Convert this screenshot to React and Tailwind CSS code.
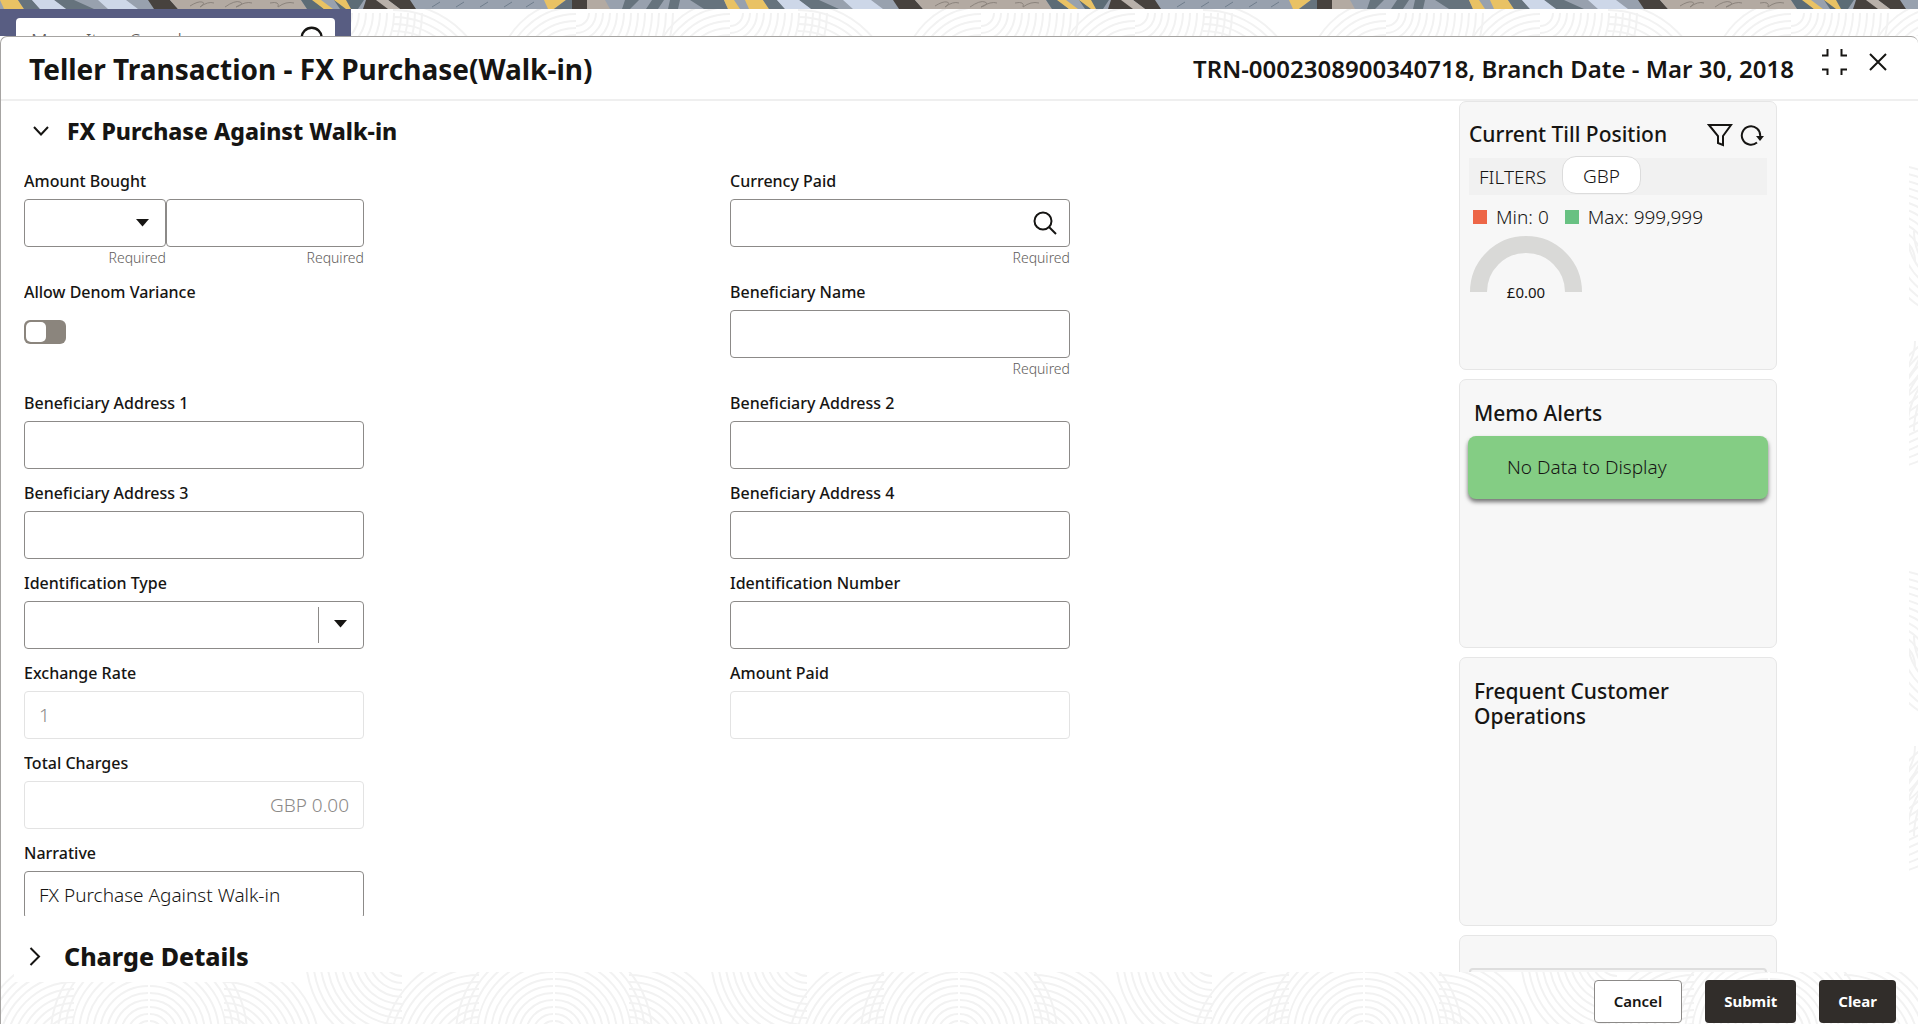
import {useState} from 'react'

// quarter arcs, concentric around cx/cy: nw, ne, sw, se
const QUADRANTS = {
  nw: [-1, -1, 1],
  ne: [1, -1, 0],
  sw: [-1, 1, 0],
  se: [1, 1, 1],
}

const FOOTER_ARCS = [
  {cx: 181, cy: 62, r: 97, quadrant: 'nw'},
  {cx: 183, cy: 62, r: 97, quadrant: 'ne'},
  {cx: 107, cy: 78, r: 96, quadrant: 'nw'},
  {cx: 257, cy: 78, r: 96, quadrant: 'ne'},
  {cx: 435, cy: -15, r: 96, quadrant: 'sw'},
  {cx: 30, cy: -15, r: 96, quadrant: 'sw'},
]

const TOP_ARCS = [
  {cx: 80, cy: 4, r: 97, quadrant: 'se'},
  {cx: 80, cy: 70, r: 79, quadrant: 'nw'},
  {cx: 234, cy: 4, r: 97, quadrant: 'se'},
  {cx: 234, cy: 70, r: 79, quadrant: 'nw'},
  {cx: 302, cy: 92, r: 98, quadrant: 'ne'},
]

const EDGE_ARCS = [
  {cx: -20, cy: 160, r: 96, quadrant: 'ne'},
  {cx: 60, cy: 130, r: 90, quadrant: 'sw'},
  {cx: 80, cy: 330, r: 110, quadrant: 'nw'},
  {cx: -40, cy: 240, r: 130, quadrant: 'se'},
]

function arcPath(cx, cy, r, quadrant) {
  const [dx, dy, sweep] = QUADRANTS[quadrant]
  return `M${cx + dx * r} ${cy}A${r} ${r} 0 0 ${sweep} ${cx} ${cy + dy * r}`
}

function RippleBackground({id, arcs, x = 0, height}) {
  return (
    <svg className="block w-full h-full" aria-hidden="true">
      <defs>
        <pattern id={id} x={x} width="405" height={height} patternUnits="userSpaceOnUse">
          <g fill="none" stroke="#f2f2f2" strokeWidth="2">
            {arcs.map(({cx, cy, r, quadrant}, index) => (
              <path
                key={index}
                d={Array.from({length: 13}, (_, i) => r - i * 7)
                  .filter(radius => radius > 0)
                  .map(radius => arcPath(cx, cy, radius, quadrant))
                  .join('')}
              />
            ))}
          </g>
        </pattern>
      </defs>
      <rect width="100%" height="100%" fill={`url(#${id})`} />
    </svg>
  )
}

function RibbonStrip() {
  return (
    <svg className="block w-full h-[9px]" aria-hidden="true">
      <defs>
        <pattern id="ribbon" width="745" height="9" patternUnits="userSpaceOnUse">
          <rect width="745" height="9" fill="#98a1ae" />
          <path d="M0 0h18l6 9H4z" fill="#e9c264" />
          <path d="M18 0h14l8 9H24zM54 0h20l20 9H66z" fill="#66737d" />
          <path d="M32 0h22l12 9H40zM98 0h28l12 9H108z" fill="#cdd7e8" />
          <path d="M148 0h22l8 9h-24z" fill="#47423e" />
          <path d="M170 0h131l6 9H178z" fill="#b3aaa2" />
          <path d="M190 6q8-5 12-4t-2 5q8-6 14-4M225 7q10-7 15-5t-4 5q10-6 16-4M270 3q10-2 8 4 8-6 16-4" fill="none" stroke="#8b837c" />
          <path d="M301 0h13l10 9h-17zM334 0h30l-6 9h-18z" fill="#5c6c76" />
          <path d="M312 0h9l12 9h-9zM334 0h12l5 9h-5z" fill="#e9c264" />
          <path d="M366 0h14l16 9h-33zM388 0h22l6 9h-16z" fill="#47423e" />
          <path d="M376 0h12l12 9h-12z" fill="#b9b1aa" />
          <path d="M432 7l8-5M456 7l8-5M480 7l8-5M504 7l8-5M526 7l8-5" stroke="#6f7d8c" />
          <path d="M544 0h22l-12 9h-6z" fill="#e9c264" />
          <path d="M566 0h8l-2 9h-18z" fill="#66737d" />
          <path d="M572 0h15v9h-15z" fill="#47423e" />
          <path d="M587 0h18l5 9h-23z" fill="#b3aaa2" />
          <path d="M625 0h14l-9 9h-8zM652 0h12l-6 9h-12zM670 0h10l-2 9h-10zM690 0h34l4 9h-24z" fill="#66737d" />
          <path d="M724 0h10l6 9h-12z" fill="#e9c264" />
        </pattern>
      </defs>
      <rect width="100%" height="9" fill="url(#ribbon)" />
    </svg>
  )
}

function SearchIcon({className = ''}) {
  return (
    <svg viewBox="0 0 24 24" className={className} fill="none" stroke="#161513" strokeWidth="2" aria-hidden="true">
      <circle cx="10" cy="10" r="8.5" />
      <path d="M16 16l7 7" />
    </svg>
  )
}

function CaretDown({className = ''}) {
  return (
    <svg viewBox="0 0 13 8" className={`w-[13px] h-2 pointer-events-none ${className}`} aria-hidden="true">
      <path d="M0 0h13L6.500 7.500z" fill="#161513" />
    </svg>
  )
}

const LABEL = 'block h-[30px] text-base leading-6 font-medium'
const INPUT = 'block w-full h-12 px-[14px] rounded-[4px] border bg-white text-[19px] font-light'
const ENABLED = 'border-[#8c8a88] text-[#161513]'
const DISABLED = 'border-[#e3e3e3] text-[#8b8987]'

function Required() {
  return <p className="pt-px text-[14px] leading-5 font-light text-right text-[#5e5c5a]">Required</p>
}

function Field({id, label, required, disabled, className = '', inputClassName = '', children, ...rest}) {
  return (
    <div className={className}>
      <label htmlFor={id} className={LABEL}>
        {label}
      </label>
      <div className="relative">
        <input
          id={id}
          type="text"
          disabled={disabled}
          className={`${INPUT} ${disabled ? DISABLED : ENABLED} ${inputClassName}`}
          {...rest}
        />
        {children}
      </div>
      {required && <Required />}
    </div>
  )
}

function FxPurchaseForm() {
  const [variance, setVariance] = useState(false)

  return (
    <div className="grid grid-cols-4 gap-x-[13px] gap-y-3 pt-[22px]">
      <fieldset>
        <legend className={LABEL}>Amount Bought</legend>
        <div className="flex">
          <div className="w-[142px]">
            <div className="relative">
              <select aria-label="Currency" className={`${INPUT} ${ENABLED} appearance-none`} />
              <CaretDown className="absolute right-[17px] top-5" />
            </div>
            <Required />
          </div>
          <div className="flex-1">
            <input type="text" aria-label="Amount" className={`${INPUT} ${ENABLED}`} />
            <Required />
          </div>
        </div>
      </fieldset>
      <Field id="currencyPaid" label="Currency Paid" required className="col-start-3" inputClassName="pr-12">
        <button type="button" aria-label="Search currency" className="absolute right-[13px] top-3">
          <SearchIcon className="w-6 h-6" />
        </button>
      </Field>

      <div className="col-start-1">
        <label htmlFor="variance" className={LABEL}>
          Allow Denom Variance
        </label>
        <label className="mt-[10px] flex w-[42px] h-6 p-[2px] rounded-[6px] bg-[#8b857d] cursor-pointer has-checked:justify-end">
          <input
            id="variance"
            type="checkbox"
            role="switch"
            checked={variance}
            onChange={() => setVariance(!variance)}
            className="sr-only"
          />
          <span className="block w-5 h-5 rounded-[5px] bg-white" />
        </label>
      </div>
      <Field id="beneficiaryName" label="Beneficiary Name" required className="col-start-3" />

      <Field id="address1" label="Beneficiary Address 1" className="col-start-1" />
      <Field id="address2" label="Beneficiary Address 2" className="col-start-3" />
      <Field id="address3" label="Beneficiary Address 3" className="col-start-1" />
      <Field id="address4" label="Beneficiary Address 4" className="col-start-3" />

      <div className="col-start-1">
        <label htmlFor="idType" className={LABEL}>
          Identification Type
        </label>
        <div className="relative">
          <select id="idType" className={`${INPUT} ${ENABLED} appearance-none`} />
          <span className="absolute right-[45px] top-[6px] h-9 w-px bg-[#8c8a88]" />
          <CaretDown className="absolute right-[17px] top-[19px]" />
        </div>
      </div>
      <Field id="idNumber" label="Identification Number" className="col-start-3" />

      <Field id="rate" label="Exchange Rate" disabled defaultValue="1" className="col-start-1" />
      <Field id="amountPaid" label="Amount Paid" disabled className="col-start-3" />
      <Field
        id="charges"
        label="Total Charges"
        disabled
        defaultValue="GBP 0.00"
        className="col-start-1"
        inputClassName="text-right"
      />
      <Field
        id="narrative"
        label="Narrative"
        defaultValue="FX Purchase Against Walk-in"
        className="col-start-1"
      />
    </div>
  )
}

function Card({children}) {
  return (
    <section className="shrink-0 h-[269px] rounded-[7px] border border-[#e6e6e6] bg-[#f7f7f7] px-[9px]">
      {children}
    </section>
  )
}

function TillPosition() {
  return (
    <Card>
      <div className="flex items-center pt-[20px]">
        <h3 className="flex-1 text-[21px] leading-[25px] font-medium">Current Till Position</h3>
        <button type="button" aria-label="Filter" className="mr-[7px]">
          <svg viewBox="0 0 26 24" className="w-[26px] h-6" fill="none" stroke="#161513" strokeWidth="2">
            <path d="M2 2h22l-8 11v9l-5-2v-7z" />
          </svg>
        </button>
        <button type="button" aria-label="Refresh" className="mr-[3px]">
          <svg viewBox="0 0 24 24" className="w-6 h-6" fill="none" stroke="#161513" strokeWidth="2">
            <path d="M17 19.500A9.200 9.200 0 1 1 20.200 13" />
            <path d="M16 13h8l-4 5z" fill="#161513" stroke="none" />
          </svg>
        </button>
      </div>
      <div className="mt-[11px] flex h-[37px] bg-[#f1f1f1] text-[19px] font-light">
        <span className="w-[93px] pl-[10px] leading-[38px]">FILTERS</span>
        <button type="button" className="-mt-[2px] w-[79px] h-[38px] rounded-[14px] border border-[#dcdcdc] bg-white pt-[3px]">
          GBP
        </button>
      </div>
      <div className="mt-2 flex items-center gap-[9px] pl-1 text-[19px] leading-7 font-light">
        <span className="w-[14px] h-[14px] bg-[#ed6647]" />
        <span>Min: 0</span>
        <span className="ml-[7px] w-[14px] h-[14px] bg-[#68c182]" />
        <span>Max: 999,999</span>
      </div>
      <svg viewBox="0 0 114 70" className="mt-1 w-[114px] h-[70px]">
        <path d="M9.500 57a47.500 47.500 0 0 1 95 0" fill="none" stroke="#d9d9d7" strokeWidth="17" />
        <text x="57" y="63" textAnchor="middle" fontSize="15" fill="#161513">
          £0.00
        </text>
      </svg>
    </Card>
  )
}

function Sidebar() {
  return (
    <aside className="w-[318px] shrink-0 flex flex-col gap-[9px]">
      <TillPosition />
      <Card>
        <h3 className="pt-[21px] pl-[5px] text-[21px] leading-[25px] font-medium">Memo Alerts</h3>
        <p className="mt-[10px] -mx-px h-[63px] pl-[39px] rounded-lg bg-[#84cd84] text-[19px] leading-[63px] font-light shadow-[0_3px_4px_#00000088]">
          No Data to Display
        </p>
      </Card>
      <Card>
        <h3 className="pt-[21px] pl-[5px] pr-16 text-[21px] leading-[25px] font-medium">
          Frequent Customer Operations
        </h3>
      </Card>
      <Card>
        <div className="mt-8 h-[180px] rounded-[4px] border-2 border-[#dedede]" />
      </Card>
    </aside>
  )
}

function DialogHeader() {
  return (
    <header className="shrink-0 flex h-[64px] items-start border-b-2 border-[#efefef] pl-7 pr-[31px]">
      <h1 className="flex-1 text-[28px] leading-[64px] font-bold">Teller Transaction - FX Purchase(Walk-in)</h1>
      <p className="text-2xl leading-[64px] font-semibold">TRN-0002308900340718, Branch Date - Mar 30, 2018</p>
      <button type="button" aria-label="Restore" className="ml-[27px] mt-3">
        <svg viewBox="0 0 27 27" className="w-[27px] h-[27px]" fill="none" stroke="#161513" strokeWidth="2">
          <path d="M1 6.500h5.500V0M20.500 0v6.500H26M1 20.500h5.500V26M20.500 26v-5.500H26" />
        </svg>
      </button>
      <button type="button" aria-label="Close" className="ml-[21px] mt-4">
        <svg viewBox="0 0 18 18" className="w-[18px] h-[18px]" fill="none" stroke="#161513" strokeWidth="2">
          <path d="M1 1l16 16M17 1L1 17" />
        </svg>
      </button>
    </header>
  )
}

const SOLID_BUTTON = 'h-[43px] px-[19px] rounded-[4px] bg-[#312d2a] font-bold text-white'

function DialogFooter() {
  return (
    <footer className="shrink-0 grid h-[52px]">
      <div className="col-start-1 row-start-1 overflow-hidden">
        <RippleBackground id="footer" arcs={FOOTER_ARCS} x={371} height={52} />
      </div>
      <div className="col-start-1 row-start-1 z-10 flex justify-end items-start gap-[23px] pt-2 pr-[22px] text-[15px]">
        <button type="button" className="h-[43px] px-[19px] rounded-[4px] border border-[#8c8a88] bg-white font-semibold">
          Cancel
        </button>
        <button type="button" className={SOLID_BUTTON}>
          Submit
        </button>
        <button type="button" className={SOLID_BUTTON}>
          Clear
        </button>
      </div>
    </footer>
  )
}

function TransactionDialog() {
  return (
    <main className="flex-1 min-h-0 flex flex-col rounded-t-[7px] border-t border-l border-[#a6a4a2] bg-white overflow-hidden">
      <DialogHeader />
      <div className="flex-1 min-h-0 flex">
        <div className="flex-1 min-w-0 flex flex-col pl-[23px]">
          <div className="flex-1 min-h-0 overflow-hidden pr-9">
            <h2 className="pt-[14px]">
              <button type="button" className="flex items-center text-[23px] leading-8 font-extrabold">
                <svg
                  viewBox="0 0 16 10"
                  className="ml-[9px] mr-[18px] w-4 h-[10px]"
                  fill="none"
                  stroke="#161513"
                  strokeWidth="2"
                >
                  <path d="M1 1l7 7.500L15 1" />
                </svg>
                FX Purchase Against Walk-in
              </button>
            </h2>
            <FxPurchaseForm />
          </div>
          <h2 className="relative z-10 shrink-0 -ml-[10px] -mb-[10px] w-[290px] h-[66px] bg-white pl-[10px] pt-[22px]">
            <button type="button" className="flex items-center text-[25px] leading-9 font-extrabold">
              <svg
                viewBox="0 0 12 19"
                className="ml-[5px] mr-[23px] w-3 h-[19px]"
                fill="none"
                stroke="#161513"
                strokeWidth="2"
              >
                <path d="M1.500 1l8.500 8.500L1.500 18" />
              </svg>
              Charge Details
            </button>
          </h2>
        </div>
        <div className="min-h-0 overflow-hidden pr-[132px] flex">
          <Sidebar />
        </div>
        <div className="w-[9px] shrink-0 overflow-hidden">
          <RippleBackground id="edge" arcs={EDGE_ARCS} height={405} />
        </div>
      </div>
      <DialogFooter />
    </main>
  )
}

function App() {
  return (
    <div className="h-screen flex flex-col overflow-hidden bg-white font-['Noto_Sans',sans-serif] text-[#161513]">
      <RibbonStrip />
      <div className="shrink-0 flex h-[27px] overflow-hidden">
        <div className="w-[351px] shrink-0 bg-[#585d82] px-4 pt-[9px]">
          <div className="flex items-start rounded-t-[4px] bg-white pl-[15px] pr-[7px]">
            <input
              type="search"
              placeholder="Menu Item Search"
              aria-label="Menu Item Search"
              className="flex-1 min-w-0 h-11 text-[19px] font-light placeholder:text-[#5e5c5a]"
            />
            <SearchIcon className="mt-2 w-7 h-7" />
          </div>
        </div>
        <div className="flex-1 overflow-hidden">
          <RippleBackground id="top" arcs={TOP_ARCS} x={145} height={27} />
        </div>
      </div>
      <TransactionDialog />
    </div>
  )
}

export default App
